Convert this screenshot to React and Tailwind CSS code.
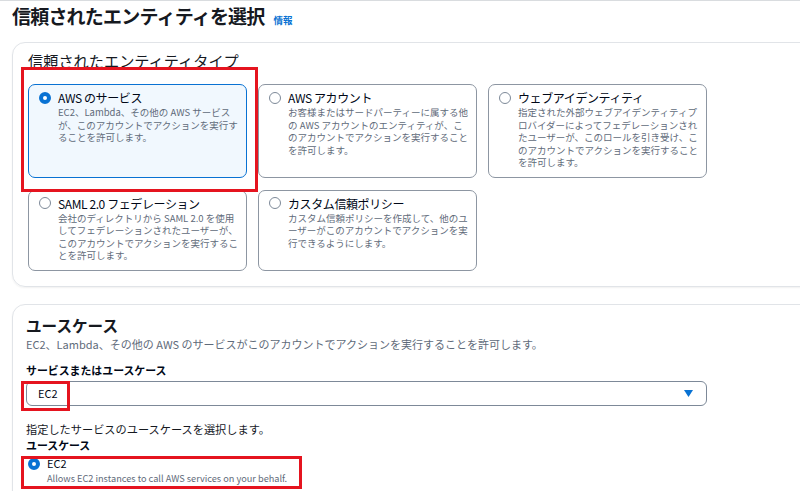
const font = { fontFamily: '"Noto Sans CJK JP", "Noto Sans", sans-serif' }

const types = [
  {
    title: 'AWS のサービス',
    lines: ['EC2、Lambda、その他の AWS サービス', 'が、このアカウントでアクションを実行す', 'ることを許可します。'],
    selected: true,
  },
  {
    title: 'AWS アカウント',
    lines: ['お客様またはサードパーティーに属する他', 'の AWS アカウントのエンティティが、こ', 'のアカウントでアクションを実行すること', 'を許可します。'],
  },
  {
    title: 'ウェブアイデンティティ',
    lines: ['指定された外部ウェブアイデンティティプ', 'ロバイダーによってフェデレーションされ', 'たユーザーが、このロールを引き受け、こ', 'のアカウントでアクションを実行すること', 'を許可します。'],
  },
  {
    title: 'SAML 2.0 フェデレーション',
    lines: ['会社のディレクトリから SAML 2.0 を使用', 'してフェデレーションされたユーザーが、', 'このアカウントでアクションを実行するこ', 'とを許可します。'],
  },
  {
    title: 'カスタム信頼ポリシー',
    lines: ['カスタム信頼ポリシーを作成して、他のユ', 'ーザーがこのアカウントでアクションを実', '行できるようにします。'],
  },
]

function Radio({ on }) {
  return on ? (
    <span className="block w-[12px] h-[12px] shrink-0 rounded-full border-[4px] border-[#0972d3] bg-white" />
  ) : (
    <span className="block w-[12px] h-[12px] shrink-0 rounded-full border-[1.5px] border-[#7d8998] bg-white" />
  )
}

function TypeCard({ t }) {
  return (
    <div
      className={
        'flex gap-[7px] rounded-[7px] border pl-[10px] pr-[8px] pt-[4px] pb-[8px] ' +
        (t.selected ? 'border-[#0972d3] bg-[#f1f8fe]' : 'border-[#8d96a2] bg-white')
      }
    >
      <div className="pt-[2.5px]">
        <Radio on={t.selected} />
      </div>
      <div>
        <div className="text-[12px] leading-[17px] tracking-[-0.4px] text-[#000716]">{t.title}</div>
        <div className="text-[9.5px] leading-[12.5px] text-[#5f6b7a]">
          {t.lines.map((l) => (
            <div key={l} className="whitespace-nowrap">{l}</div>
          ))}
        </div>
      </div>
    </div>
  )
}

function RedBox({ className }) {
  return <div className={'absolute border-[3px] border-[#e5141f] pointer-events-none ' + className} />
}

export default function App() {
  return (
    <div className="relative w-[800px] h-[491px] overflow-hidden bg-white" style={font}>
      <div className="h-px bg-[#d9dcdf]" />

      {/* Title */}
      <div className="mt-[3px] pl-[12px] flex items-baseline gap-[9px] h-[24px]">
        <h1 className="text-[19px] leading-[24px] tracking-[-0.8px] font-bold text-[#16191f]">信頼されたエンティティを選択</h1>
        <span className="text-[9.5px] font-bold text-[#0972d3]">情報</span>
      </div>

      {/* Trusted entity type panel */}
      <div className="mt-[14px] ml-[12px] w-[820px] rounded-[13px] border border-[#e1e4e8] shadow-[0_1px_2px_rgba(0,0,0,0.06)] pl-[15px] pt-[7px] pb-[15px]">
        <h2 className="text-[15.2px] leading-[20px] text-[#16191f]">信頼されたエンティティタイプ</h2>
        <div className="mt-[14px] grid grid-cols-[219px_219px_219px] gap-x-[11px] gap-y-[12px]">
          {types.map((t) => (
            <TypeCard key={t.title} t={t} />
          ))}
        </div>
      </div>

      {/* Use case panel */}
      <div className="mt-[17px] ml-[12px] w-[820px] h-[300px] rounded-[13px] border border-[#e1e4e8] shadow-[0_1px_2px_rgba(0,0,0,0.06)] pl-[13px] pt-[10px]">
        <h2 className="text-[15.6px] leading-[20px] font-bold text-[#16191f]">ユースケース</h2>
        <p className="mt-[2px] text-[11px] leading-[14px] text-[#5f6b7a]">
          EC2、Lambda、その他の AWS のサービスがこのアカウントでアクションを実行することを許可します。
        </p>
        <div className="mt-[12px] text-[10.9px] leading-[14px] font-bold text-[#000716]">サービスまたはユースケース</div>
        <div className="mt-[4px] w-[681px] h-[25px] rounded-[6px] border border-[#7d8998] flex items-center justify-between pl-[11px] pr-[13px]">
          <span className="text-[11px] text-[#000716]">EC2</span>
          <svg width="9" height="7" viewBox="0 0 9 7">
            <path d="M0 0 H9 L4.5 7 Z" fill="#0972d3" />
          </svg>
        </div>
        <div className="mt-[16px] text-[11.2px] leading-[14px] text-[#16191f]">指定したサービスのユースケースを選択します。</div>
        <div className="mt-[2px] text-[10.9px] leading-[14px] font-bold text-[#000716]">ユースケース</div>
        <div className="mt-[4px] flex gap-[7px] pl-[2px]">
          <div className="pt-[2px]">
            <Radio on />
          </div>
          <div>
            <div className="text-[11px] leading-[14px] text-[#000716]">EC2</div>
            <div className="mt-[2px] text-[9.2px] leading-[12px] text-[#5f6b7a]">
              Allows EC2 instances to call AWS services on your behalf.
            </div>
          </div>
        </div>
      </div>

      {/* Annotation boxes */}
      <RedBox className="left-[21px] top-[67px] w-[237px] h-[125px]" />
      <RedBox className="left-[21px] top-[381px] w-[49px] h-[30px]" />
      <RedBox className="left-[21px] top-[456px] w-[281px] h-[33px]" />
    </div>
  )
}
